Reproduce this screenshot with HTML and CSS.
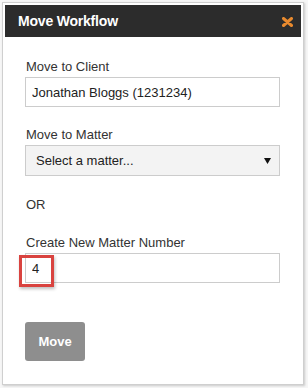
FILE: index.html
```html
<!DOCTYPE html>
<html>
<head>
<meta charset="utf-8">
<link rel="stylesheet" href="styles.css">
</head>
<body>
<div class="dialog">
  <div class="header">
    <span class="title">Move Workflow</span>
    <svg class="close" width="11" height="10" viewBox="0 0 11 10"><path d="M1.5 1.5 L9.5 8.5 M9.5 1.5 L1.5 8.5" stroke="#e98a2e" stroke-width="3" stroke-linecap="round"/></svg>
  </div>
  <div class="content">
    <div class="label">Move to Client</div>
    <input class="field" type="text" value="Jonathan Bloggs (1231234)">
    <div class="label gap">Move to Matter</div>
    <div class="select"><span>Select a matter...</span><svg width="7" height="6" viewBox="0 0 7 6"><path d="M0 0 H7 L3.5 6 Z" fill="#111"/></svg></div>
    <div class="label or">OR</div>
    <div class="label gap2">Create New Matter Number</div>
    <div class="fieldwrap">
      <input class="field" type="text" value="4">
      <div class="highlight"></div>
    </div>
    <button class="move">Move</button>
  </div>
</div>
</body>
</html>
```
FILE: styles.css
```css
html, body { margin: 0; padding: 0; }
body {
  background: #f6f6f6;
  font-family: "Liberation Sans", Arial, sans-serif;
  width: 308px;
  height: 388px;
  overflow: hidden;
}
.dialog {
  box-sizing: border-box;
  margin: 2px 0 0 2px;
  width: 302px;
  height: 383px;
  border: 1px solid #cfcfcf;
  padding: 2px;
  background: #fff;
  box-shadow: 1px 1px 2px rgba(0,0,0,0.18);
}
.header {
  height: 32px;
  background: #2c2c2c;
  display: flex;
  align-items: center;
  justify-content: space-between;
  padding: 0 8px 0 13px;
}
.title {
  color: #fff;
  font-weight: bold;
  font-size: 14px;
  letter-spacing: -0.2px;
}
.close { display: block; margin-top: 1px; }
.content {
  padding: 22px 0 0 20px;
  display: flex;
  flex-direction: column;
  align-items: flex-start;
}
.label {
  font-size: 13px;
  line-height: 16px;
  color: #333;
  margin-left: 1px;
  margin-bottom: 2px;
}
.label.gap { margin-top: 20px; }
.label.or { margin-top: 21px; margin-bottom: 0; }
.label.gap2 { margin-top: 22px; }
.field {
  box-sizing: border-box;
  width: 255px;
  height: 30px;
  margin: 0;
  border: 1px solid #cccccc;
  padding: 0 6px;
  font-family: "Liberation Sans", Arial, sans-serif;
  font-size: 13px;
  color: #222;
  background: #fff;
  outline: none;
}
.select {
  box-sizing: border-box;
  width: 255px;
  height: 31px;
  border: 1px solid #cccccc;
  background: #f3f3f3;
  display: flex;
  align-items: center;
  justify-content: space-between;
  padding: 0 8px 0 10px;
  font-size: 13px;
  color: #222;
}
.fieldwrap { position: relative; }
.highlight {
  position: absolute;
  left: -6px;
  top: 2px;
  width: 35px;
  height: 32px;
  box-sizing: border-box;
  border: 3px solid #d9433f;
  box-shadow: 1px 2px 3px rgba(0,0,0,0.25);
}
.move {
  margin-top: 39px;
  width: 60px;
  height: 39px;
  border: none;
  border-radius: 3px;
  background: #8e8e8e;
  color: #fff;
  font-family: "Liberation Sans", Arial, sans-serif;
  font-weight: bold;
  font-size: 13px;
  padding: 0;
}
```
